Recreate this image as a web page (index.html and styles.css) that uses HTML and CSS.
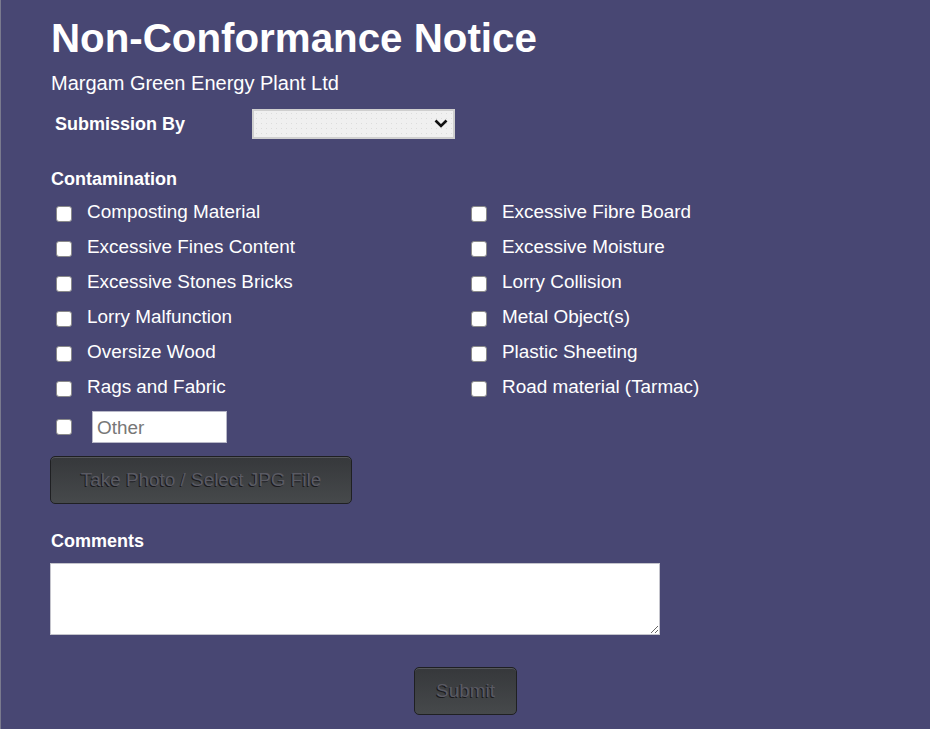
FILE: index.html
```html
<!DOCTYPE html>
<html>
<head>
<meta charset="utf-8">
<title>Non-Conformance Notice</title>
<link rel="stylesheet" href="styles.css">
</head>
<body>
<div class="page">
  <h1 class="title">Non-Conformance Notice</h1>
  <div class="subtitle">Margam Green Energy Plant Ltd</div>
  <div class="submission">
    <label class="sub-label">Submission By</label>
    <div class="select-wrap">
      <select class="sub-select"><option></option></select>
      <svg class="chevron" width="14" height="9" viewBox="0 0 14 9"><path d="M1.5 1.5 L7 7 L12.5 1.5" fill="none" stroke="#111" stroke-width="2.6"/></svg>
    </div>
  </div>
  <div class="section-label contam-label">Contamination</div>
  <div class="checks">
    <label class="check"><input type="checkbox"><span>Composting Material</span></label>
    <label class="check"><input type="checkbox"><span>Excessive Fibre Board</span></label>
    <label class="check"><input type="checkbox"><span>Excessive Fines Content</span></label>
    <label class="check"><input type="checkbox"><span>Excessive Moisture</span></label>
    <label class="check"><input type="checkbox"><span>Excessive Stones Bricks</span></label>
    <label class="check"><input type="checkbox"><span>Lorry Collision</span></label>
    <label class="check"><input type="checkbox"><span>Lorry Malfunction</span></label>
    <label class="check"><input type="checkbox"><span>Metal Object(s)</span></label>
    <label class="check"><input type="checkbox"><span>Oversize Wood</span></label>
    <label class="check"><input type="checkbox"><span>Plastic Sheeting</span></label>
    <label class="check"><input type="checkbox"><span>Rags and Fabric</span></label>
    <label class="check"><input type="checkbox"><span>Road material (Tarmac)</span></label>
  </div>
  <div class="other-row">
    <input type="checkbox">
    <input type="text" class="other-input" placeholder="Other">
  </div>
  <button class="dark-btn photo-btn">Take Photo / Select JPG File</button>
  <div class="section-label comments-label">Comments</div>
  <textarea class="comments"></textarea>
  <div class="submit-row">
    <button class="dark-btn submit-btn">Submit</button>
  </div>
</div>
</body>
</html>
```

FILE: styles.css
```css
html, body {
  margin: 0;
  padding: 0;
  background: #484773;
  height: 100%;
}
body {
  font-family: "Liberation Sans", Arial, sans-serif;
  color: #ffffff;
  border-left: 1px solid #7a7a8e;
  box-sizing: border-box;
}
.page {
  padding: 15px 0 0 50px;
}
.title {
  margin: 0;
  font-size: 40.3px;
  line-height: 48px;
  font-weight: bold;
}
.subtitle {
  font-size: 20px;
  line-height: 24px;
  margin-top: 8px;
}
.submission {
  display: flex;
  align-items: center;
  margin-top: 14px;
  padding-left: 4px;
  height: 30px;
}
.sub-label {
  font-size: 18px;
  font-weight: bold;
  width: 197px;
  padding-top: 1px;
}
.select-wrap {
  position: relative;
  width: 203px;
  height: 30px;
}
.sub-select {
  appearance: none;
  -webkit-appearance: none;
  width: 203px;
  height: 30px;
  background-color: #f0f0f0;
  background-image: radial-gradient(circle, #dcdcdc 0.7px, transparent 0.8px);
  background-size: 5px 5px;
  border: 2px solid #cfcfcf;
  border-radius: 0;
  font-size: 16px;
}
.chevron {
  position: absolute;
  right: 7px;
  top: 10px;
  pointer-events: none;
}
.section-label {
  font-size: 18px;
  font-weight: bold;
  line-height: 22px;
}
.contam-label {
  margin-top: 29px;
}
.checks {
  display: grid;
  grid-template-columns: 415px 300px;
  row-gap: 13px;
  margin-top: 11px;
  padding-left: 5px;
}
.check {
  display: flex;
  align-items: flex-start;
  font-size: 18.9px;
  line-height: 22px;
}
.check input,
.other-row input[type="checkbox"] {
  appearance: none;
  -webkit-appearance: none;
  width: 16px;
  height: 16px;
  margin: 5px 15px 0 0;
  background: #fff;
  border: 1px solid #8a8a8a;
  border-radius: 3px;
  flex: none;
}
.other-row {
  display: flex;
  align-items: center;
  margin-top: 13px;
  padding-left: 5px;
}
.other-row input[type="checkbox"] {
  margin: 0 20px 0 0;
}
.other-input {
  width: 135px;
  height: 32px;
  box-sizing: border-box;
  border: 1px solid #b8b8c8;
  font-family: "Liberation Sans", Arial, sans-serif;
  font-size: 18.9px;
  padding: 2px 4px 0;
  color: #333;
}
.other-input::placeholder {
  color: #777;
}
.dark-btn {
  font-family: "Liberation Sans", Arial, sans-serif;
  font-size: 18.9px;
  color: #5a5a63;
  text-shadow: -1px 1px 0 #1a1a1d;
  background: linear-gradient(#36383b, #46494b);
  border: 1px solid #1f2022;
  border-radius: 5px;
  box-shadow: inset 0 1px 0 #55575a;
}
.photo-btn {
  display: block;
  width: 302px;
  height: 48px;
  margin-top: 13px;
  margin-left: -1px;
}
.comments-label {
  margin-top: 26px;
}
.comments {
  display: block;
  width: 610px;
  height: 72px;
  box-sizing: border-box;
  margin-top: 11px;
  margin-left: -1px;
  border: 1px solid #c4c4cc;
  border-radius: 0;
}
.submit-row {
  display: flex;
  justify-content: center;
  margin-top: 32px;
  margin-left: -50px;
}
.submit-btn {
  width: 103px;
  height: 48px;
}
```
